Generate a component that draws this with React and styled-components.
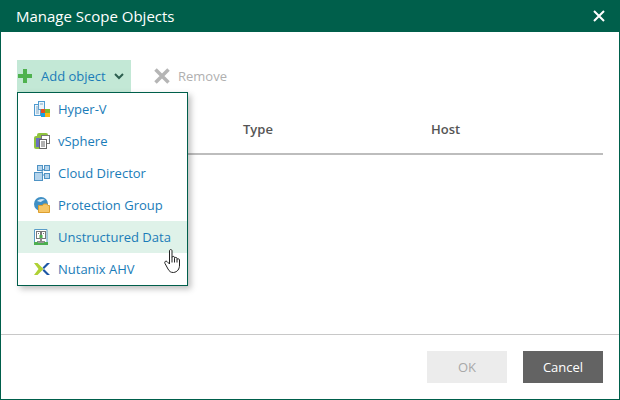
import React from "react";
import styled, { createGlobalStyle } from "styled-components";

const GlobalStyle = createGlobalStyle`
  html, body {
    margin: 0;
    padding: 0;
    background: #fff;
  }
  body {
    font-family: "Open Sans", "Noto Sans", sans-serif;
    font-size: 13px;
  }
`;

const Dialog = styled.div`
  width: 620px;
  height: 400px;
  box-sizing: border-box;
  display: flex;
  flex-direction: column;
  border: 1px solid #005f4b;
  border-top: 0;
  background: #fff;
`;

const TitleBar = styled.div`
  height: 32px;
  flex: none;
  margin: 0 -1px;
  padding: 0 16px;
  display: flex;
  align-items: center;
  justify-content: space-between;
  background: #005f4b;
  color: #fff;
  font-size: 15px;
`;

const CloseButton = styled.div`
  width: 14px;
  height: 14px;
  margin-right: -2px;
  display: flex;
`;

const Body = styled.div`
  flex: 1;
  position: relative;
  padding: 28px 16px 0;
`;

const Toolbar = styled.div`
  display: flex;
  align-items: center;
  gap: 23px;
  height: 32px;
`;

const AddButton = styled.div`
  width: 114px;
  height: 32px;
  box-sizing: border-box;
  padding: 0 7px 0 1px;
  display: flex;
  align-items: center;
  background: #c3e8d6;
  color: #1a7cb8;
`;

const AddLabel = styled.span`
  margin-left: 9px;
  flex: 1;
`;

const RemoveButton = styled.div`
  display: flex;
  align-items: center;
  gap: 8px;
  color: #b0b0b0;
`;

const TableHead = styled.div`
  margin-top: 21px;
  height: 42px;
  box-sizing: border-box;
  padding: 0 0 8px 226px;
  display: grid;
  grid-template-columns: 188px 1fr;
  align-items: center;
  border-bottom: 2px solid #bdbdbd;
  color: #555;
  font-weight: 600;
`;

const Menu = styled.div`
  position: absolute;
  left: 16px;
  top: 60px;
  width: 171px;
  box-sizing: border-box;
  border: 1px solid #005f4b;
  background: #fff;
  box-shadow: 3px 3px 6px rgba(0, 0, 0, 0.25);
`;

const MenuItem = styled.div`
  height: 32px;
  padding-left: 16px;
  display: flex;
  align-items: center;
  gap: 8px;
  color: #1a7cb8;
  background: ${(p) => (p.$active ? "#dff2e9" : "transparent")};
`;

const IconSlot = styled.span`
  width: 16px;
  height: 16px;
  display: flex;
  align-items: center;
  flex: none;
`;

const Pointer = styled.svg`
  position: absolute;
  left: 163px;
  top: 217px;
`;

const Footer = styled.div`
  height: 65px;
  flex: none;
  box-sizing: border-box;
  padding: 16px 16px 0 0;
  display: flex;
  justify-content: flex-end;
  gap: 16px;
  border-top: 1px solid #c8c8c8;
`;

const FooterButton = styled.div`
  width: 80px;
  height: 32px;
  display: flex;
  align-items: center;
  justify-content: center;
  background: ${(p) => (p.$primary ? "#ececec" : "#636363")};
  color: ${(p) => (p.$primary ? "#a8a8a8" : "#fff")};
`;

const HyperVIcon = () => (
  <svg width="16" height="16" viewBox="0 0 16 16">
    <rect x="0.5" y="3.5" width="6" height="11" fill="#eef5fb" stroke="#4f9bd0" />
    <rect x="4.5" y="0.5" width="6" height="8" fill="#eef5fb" stroke="#4f9bd0" />
    <path d="M2 6h3M2 8h3M2 10h3M2 12h3M6 3h3" stroke="#7fa8c4" />
    <rect x="7" y="8" width="4" height="4" fill="#e8501f" />
    <rect x="11" y="8" width="5" height="4" fill="#7fba2c" />
    <rect x="7" y="12" width="4" height="4" fill="#1ba1e2" />
    <rect x="11" y="12" width="5" height="4" fill="#fdb813" />
  </svg>
);

const VSphereIcon = () => (
  <svg width="16" height="16" viewBox="0 0 16 16">
    <rect x="3" y="0" width="11" height="10" rx="2" fill="#8fc33f" />
    <rect x="0" y="3" width="9" height="13" rx="2" fill="#8fc33f" />
    <rect x="2" y="5" width="6" height="9" fill="#6a6fc0" />
    <rect x="7.5" y="2.5" width="8" height="8" fill="#fff" stroke="#777" />
    <rect x="5.5" y="6.5" width="7" height="9" fill="#fff" stroke="#666" />
    <path d="M7 9h4M7 11h4M7 13h4" stroke="#666" />
  </svg>
);

const CloudDirectorIcon = () => (
  <svg width="16" height="16" viewBox="0 0 16 16">
    <path d="M7 8L10 4M9 10h2" stroke="#4f93c4" />
    <rect x="3.5" y="0.5" width="5" height="5" fill="#b5d4ec" stroke="#4f93c4" />
    <rect x="10.5" y="0.5" width="5" height="5" fill="#b5d4ec" stroke="#4f93c4" />
    <rect x="0.5" y="7.5" width="8" height="8" fill="#b5d4ec" stroke="#4f93c4" />
    <rect x="10.5" y="8.5" width="5" height="5" fill="#b5d4ec" stroke="#4f93c4" />
  </svg>
);

const ProtectionGroupIcon = () => (
  <svg width="16" height="16" viewBox="0 0 16 16">
    <circle cx="7" cy="7" r="7" fill="#3f8fc4" />
    <path d="M3 4c2-2 6-3 8-1-2 0-3 1-4 2-2 0-3-1-4-1z" fill="#d5e8f5" />
    <path d="M4.5 15.500V8.500h4l1-1.500h3.500l1 1.500h1.500v7z" fill="#f6c667" stroke="#dd9f2e" />
  </svg>
);

const UnstructuredIcon = () => (
  <svg width="14" height="16" viewBox="0 0 14 16">
    <path d="M0.500 13V0.500h12.500V13" fill="#fff" stroke="#5a9cc8" />
    <rect x="2.500" y="2.500" width="4" height="7" fill="#fff" stroke="#777" />
    <rect x="7.500" y="2.500" width="4" height="7" fill="#fff" stroke="#777" />
    <path d="M4 4.500h1M9 4.500h1" stroke="#777" />
    <rect x="5.500" y="6" width="3" height="3" fill="#4caf50" />
    <rect x="6" y="9" width="2" height="4" fill="#8a8a8a" />
    <rect x="3" y="12" width="8" height="1" fill="#8a8a8a" />
    <rect x="0" y="13" width="14" height="3" fill="#4caf50" />
    <rect x="4" y="13" width="6" height="1" fill="#9a9a9a" />
  </svg>
);

const NutanixIcon = () => (
  <svg width="16" height="12" viewBox="0 0 16 12">
    <path d="M0 0h3.500l6 6-6 6H0l4.500-6z" fill="#afd135" />
    <path d="M16 0h-3L8.500 4.500 10 6zM16 12h-3L8.500 7.500 10 6z" fill="#1c56a5" />
  </svg>
);

const items = [
  { label: "Hyper-V", icon: <HyperVIcon /> },
  { label: "vSphere", icon: <VSphereIcon /> },
  { label: "Cloud Director", icon: <CloudDirectorIcon /> },
  { label: "Protection Group", icon: <ProtectionGroupIcon /> },
  { label: "Unstructured Data", icon: <UnstructuredIcon />, active: true },
  { label: "Nutanix AHV", icon: <NutanixIcon /> },
];

export default function App() {
  return (
    <>
      <GlobalStyle />
      <Dialog>
        <TitleBar>
          Manage Scope Objects
          <CloseButton>
            <svg width="14" height="14" viewBox="0 0 14 14">
              <path d="M2 2l10 10M12 2L2 12" stroke="#fff" strokeWidth="2" />
            </svg>
          </CloseButton>
        </TitleBar>
        <Body>
          <Toolbar>
            <AddButton>
              <svg width="14" height="14" viewBox="0 0 14 14">
                <path d="M5 0h4v5h5v4H9v5H5V9H0V5h5z" fill="#4fb24f" />
              </svg>
              <AddLabel>Add object</AddLabel>
              <svg width="10" height="7" viewBox="0 0 10 7">
                <path d="M1 1l4 4 4-4" fill="none" stroke="#2d5f50" strokeWidth="2" />
              </svg>
            </AddButton>
            <RemoveButton>
              <svg width="16" height="16" viewBox="0 0 16 16">
                <path d="M1.500 1.500l13 13M14.500 1.500l-13 13" stroke="#b5b5b5" strokeWidth="3.500" />
              </svg>
              Remove
            </RemoveButton>
          </Toolbar>
          <TableHead>
            <span>Type</span>
            <span>Host</span>
          </TableHead>
          <Menu>
            {items.map((item) => (
              <MenuItem key={item.label} $active={item.active}>
                <IconSlot>{item.icon}</IconSlot>
                {item.label}
              </MenuItem>
            ))}
          </Menu>
          <Pointer width="18" height="25" viewBox="0 0 18 25">
            <path
              d="M5.500 2c0-2 2.500-2 2.500 0v6.500c0-1.500 2.500-1.500 2.500 0v1c0-1.500 2.500-1.500 2.500 0v1c0-1 2.500-1 2.500.5v5c0 4-2 7-6 7.500-3 0-4-1-5.500-3.500L1 14.500c-1-2 1-3 2-2l2.500 2.500z"
              fill="#fff"
              stroke="#222"
              strokeWidth="1"
            />
            <path d="M8 8.500v5M10.500 9.500v4M13 10.500v3" stroke="#222" strokeWidth="1" fill="none" />
          </Pointer>
        </Body>
        <Footer>
          <FooterButton $primary>OK</FooterButton>
          <FooterButton>Cancel</FooterButton>
        </Footer>
      </Dialog>
    </>
  );
}
